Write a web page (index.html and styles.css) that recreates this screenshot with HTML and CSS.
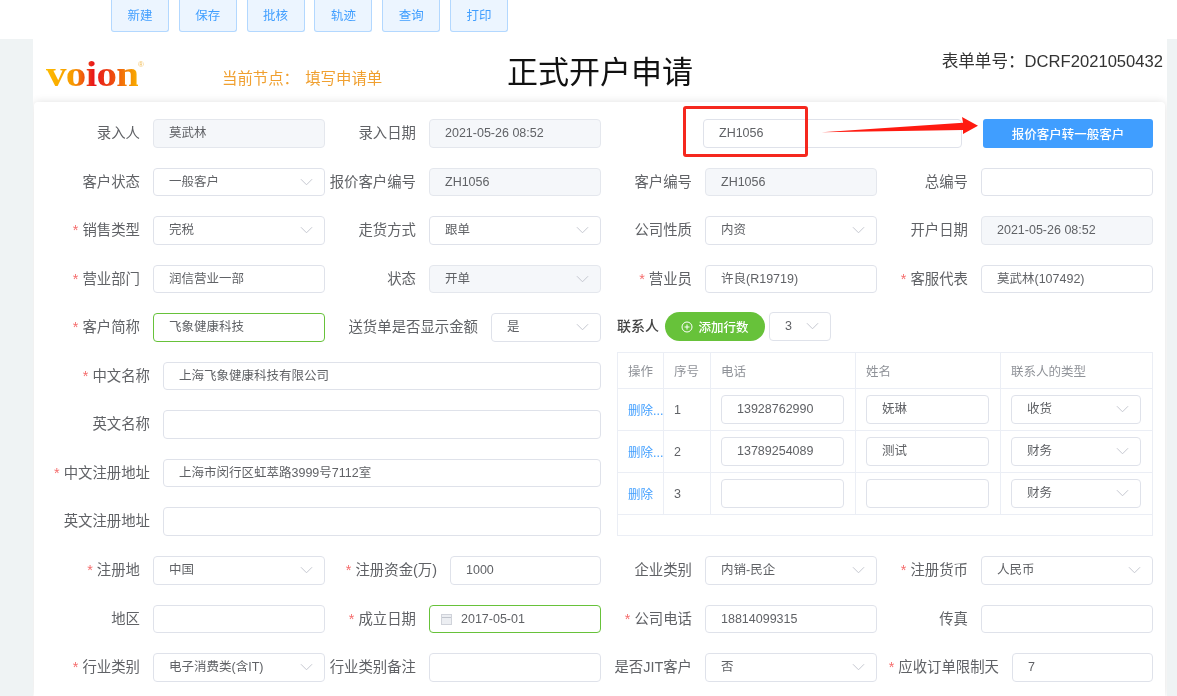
FILE: index.html
```html
<!DOCTYPE html>
<html>
<head>
  <meta charset="UTF-8">
  <title>正式开户申请</title>
  <link rel="stylesheet" href="styles.css">
</head>
<body>

  <svg width="0" height="0" class="defs">
    <symbol id="chev" viewBox="0 0 14 8"><polyline points="1,1 7,7 13,1" fill="none" stroke="#c0c4cc" stroke-width="1"/></symbol>
  </svg>

  <div class="toolbar">
    <button class="tool">新建</button>
    <button class="tool">保存</button>
    <button class="tool">批核</button>
    <button class="tool">轨迹</button>
    <button class="tool">查询</button>
    <button class="tool">打印</button>
  </div>

  <div class="shell">
    <div class="main">
      <div class="head">
        <div class="logo"><span class="logo-text">voion</span><span class="reg">®</span></div>
        <div class="node">当前节点： 填写申请单</div>
        <h1 class="title">正式开户申请</h1>
        <div class="formno">表单单号：DCRF2021050432</div>
      </div>

      <div class="card">
        <div class="row">
          <div class="field"><label>录入人</label><div class="ctl off">莫武林</div></div>
          <div class="field"><label>录入日期</label><div class="ctl off">2021-05-26 08:52</div></div>
          <div class="convert">
            <div class="ctl">ZH1056</div>
            <button class="btn-blue">报价客户转一般客户</button>
          </div>
        </div>

        <div class="row">
          <div class="field"><label>客户状态</label><div class="ctl sel">一般客户<svg class="chev"><use href="#chev"/></svg></div></div>
          <div class="field"><label>报价客户编号</label><div class="ctl off">ZH1056</div></div>
          <div class="field"><label>客户编号</label><div class="ctl off">ZH1056</div></div>
          <div class="field"><label>总编号</label><div class="ctl"></div></div>
        </div>

        <div class="row">
          <div class="field"><label><i>*</i>销售类型</label><div class="ctl sel">完税<svg class="chev"><use href="#chev"/></svg></div></div>
          <div class="field"><label>走货方式</label><div class="ctl sel">跟单<svg class="chev"><use href="#chev"/></svg></div></div>
          <div class="field"><label>公司性质</label><div class="ctl sel">内资<svg class="chev"><use href="#chev"/></svg></div></div>
          <div class="field"><label>开户日期</label><div class="ctl off">2021-05-26 08:52</div></div>
        </div>

        <div class="row">
          <div class="field"><label><i>*</i>营业部门</label><div class="ctl">润信营业一部</div></div>
          <div class="field"><label>状态</label><div class="ctl sel off">开单<svg class="chev"><use href="#chev"/></svg></div></div>
          <div class="field"><label><i>*</i>营业员</label><div class="ctl">许良(R19719)</div></div>
          <div class="field"><label><i>*</i>客服代表</label><div class="ctl">莫武林(107492)</div></div>
        </div>

        <div class="middle">
          <div class="left">
            <div class="subrow">
              <div class="field"><label><i>*</i>客户简称</label><div class="ctl ok">飞象健康科技</div></div>
              <div class="field w153"><label>送货单是否显示金额</label><div class="ctl sel">是<svg class="chev"><use href="#chev"/></svg></div></div>
            </div>
            <div class="field wide"><label><i>*</i>中文名称</label><div class="ctl">上海飞象健康科技有限公司</div></div>
            <div class="field wide"><label>英文名称</label><div class="ctl"></div></div>
            <div class="field wide"><label><i>*</i>中文注册地址</label><div class="ctl">上海市闵行区虹萃路3999号7112室</div></div>
            <div class="field wide"><label>英文注册地址</label><div class="ctl"></div></div>
          </div>

          <div class="contacts">
            <div class="contact-bar">
              <span class="contact-title">联系人</span>
              <button class="btn-green">
                <svg class="plus" viewBox="0 0 12 12"><circle cx="6" cy="6" r="5" fill="none" stroke="#fff"/><path d="M6 3.5v5M3.5 6h5" stroke="#fff"/></svg>添加行数
              </button>
              <div class="ctl sel count">3<svg class="chev"><use href="#chev"/></svg></div>
            </div>
            <table class="grid">
              <colgroup><col class="c1"><col class="c2"><col class="c3"><col class="c3"><col></colgroup>
              <tr class="th">
                <th>操作</th><th>序号</th><th>电话</th><th>姓名</th><th>联系人的类型</th>
              </tr>
              <tr>
                <td class="del">删除...</td><td>1</td>
                <td><div class="ctl">13928762990</div></td>
                <td><div class="ctl">妩琳</div></td>
                <td><div class="ctl sel">收货<svg class="chev"><use href="#chev"/></svg></div></td>
              </tr>
              <tr>
                <td class="del">删除...</td><td>2</td>
                <td><div class="ctl">13789254089</div></td>
                <td><div class="ctl">测试</div></td>
                <td><div class="ctl sel">财务<svg class="chev"><use href="#chev"/></svg></div></td>
              </tr>
              <tr>
                <td class="del">删除</td><td>3</td>
                <td><div class="ctl"></div></td>
                <td><div class="ctl"></div></td>
                <td><div class="ctl sel">财务<svg class="chev"><use href="#chev"/></svg></div></td>
              </tr>
              <tr class="empty"><td colspan="5"></td></tr>
            </table>
          </div>
        </div>

        <div class="row">
          <div class="field"><label><i>*</i>注册地</label><div class="ctl sel">中国<svg class="chev"><use href="#chev"/></svg></div></div>
          <div class="field w112"><label><i>*</i>注册资金(万)</label><div class="ctl">1000</div></div>
          <div class="field"><label>企业类别</label><div class="ctl sel">内销-民企<svg class="chev"><use href="#chev"/></svg></div></div>
          <div class="field"><label><i>*</i>注册货币</label><div class="ctl sel">人民币<svg class="chev"><use href="#chev"/></svg></div></div>
        </div>

        <div class="row">
          <div class="field"><label>地区</label><div class="ctl"></div></div>
          <div class="field"><label><i>*</i>成立日期</label>
            <div class="ctl ok date">
              <svg class="cal" viewBox="0 0 11 12"><rect x="0.5" y="1.5" width="10" height="10" fill="#eceef2" stroke="#d0d3da"/><path d="M1 4.5h9" stroke="#c0c4cc"/></svg>2017-05-01
            </div>
          </div>
          <div class="field"><label><i>*</i>公司电话</label><div class="ctl">18814099315</div></div>
          <div class="field"><label>传真</label><div class="ctl"></div></div>
        </div>

        <div class="row">
          <div class="field"><label><i>*</i>行业类别</label><div class="ctl sel">电子消费类(含IT)<svg class="chev"><use href="#chev"/></svg></div></div>
          <div class="field"><label>行业类别备注</label><div class="ctl"></div></div>
          <div class="field"><label>是否JIT客户</label><div class="ctl sel">否<svg class="chev"><use href="#chev"/></svg></div></div>
          <div class="field w122"><label><i>*</i>应收订单限制天</label><div class="ctl">7</div></div>
        </div>
      </div>
    </div>
  </div>

  <!-- annotation drawn over the screenshot -->
  <div class="redbox"></div>
  <svg class="arrow" viewBox="0 0 160 20"><polygon points="0.7,15.3 142,5.7 141,0 157,8.7 142,17 142,13" fill="#ff1a10"/></svg>

</body>
</html>
```

FILE: styles.css
```css
* {
  box-sizing: border-box;
}
html, body {
  margin: 0;
  height: 696px;
  overflow: hidden;
}
body {
  position: relative;
  background: white;
  font-family: "Liberation Sans", "Noto Sans CJK SC", sans-serif;
  color: #606266;
  font-size: 12.5px;
  filter: blur(0.35px);
}
.defs {
  position: absolute;
}

.toolbar {
  height: 39px;
  padding-left: 111px;
  display: flex;
  gap: 9.8px;
  background: white;
}
.tool {
  width: 58px;
  height: 32px;
  margin: 0;
  padding: 0 0 2px;
  background: #ecf5ff;
  border: 1px solid #b3d8ff;
  border-top: none;
  border-radius: 0 0 3px 3px;
  color: #409eff;
  font: inherit;
}

.shell {
  height: 657px;
  padding-left: 33px;
  background: #eff3f4;
}
.main {
  width: 1134px;
  height: 100%;
  background: white;
  overflow: hidden;
}
.head {
  height: 63px;
  display: flex;
  padding-left: 13px;
}
.logo {
  position: relative;
  width: 176px;
  margin-top: 12px;
}
.logo-text {
  display: inline-block;
  font-family: "Liberation Serif", serif;
  font-weight: bold;
  font-size: 36px;
  line-height: 46px;
  letter-spacing: -0.6px;
  transform: scaleX(1.14);
  transform-origin: left;
  background: linear-gradient(90deg, #fdbb00 0, #f79a00 24px, #e8141c 42px, #ee4a10 58px, #f8a800 79px);
  -webkit-background-clip: text;
  background-clip: text;
  color: transparent;
}
.reg {
  position: absolute;
  left: 92px;
  top: 10px;
  width: 7px;
  height: 7px;
  font-size: 8px;
  line-height: 7px;
  color: #f2c060;
}
.node {
  width: 285px;
  margin-top: 30px;
  font-size: 15.4px;
  line-height: 20px;
  word-spacing: 2px;
  color: #f0a030;
}
.title {
  width: 230px;
  margin: 12px 0 0;
  font-size: 31px;
  line-height: 44px;
  font-weight: normal;
  color: #111;
}
.formno {
  margin-left: auto;
  margin-top: 13px;
  padding-right: 4px;
  font-size: 16.6px;
  line-height: 20px;
  color: #333;
  white-space: nowrap;
}

.card {
  width: 1131px;
  margin-left: 1px;
  height: 594px;
  padding: 17px 15px 0;
  background: white;
  border-radius: 4px 4px 0 0;
  box-shadow: 0 0 8px rgba(0,0,0,0.12);
  display: flex;
  flex-direction: column;
  gap: 20px;
  overflow: hidden;
}
.row {
  display: grid;
  grid-template-columns: repeat(4, 276px);
}
.subrow {
  display: grid;
  grid-template-columns: 276px 276px;
}

.field {
  display: flex;
  height: 28.5px;
  align-items: center;
}
.field label {
  flex: none;
  width: 91px;
  margin-right: 13px;
  padding-bottom: 3px;
  text-align: right;
  white-space: nowrap;
  font-size: 14.4px;
}
.field label i {
  margin-right: 4px;
  color: #f56c6c;
  font-style: normal;
}
.field .ctl {
  flex: 1;
}
.field.w112 label { width: 112px; }
.field.w122 label { width: 122px; }
.field.w153 label { width: 153px; }
.field.wide label { width: 101px; }

.ctl {
  position: relative;
  height: 28.5px;
  padding-left: 15px;
  line-height: 26.5px;
  background: white;
  border: 1px solid #dfe2ea;
  border-radius: 4px;
  white-space: nowrap;
  overflow: hidden;
}
.ctl.off {
  background: #f5f7fa;
  border-color: #e4e7ed;
}
.ctl.ok {
  border-color: #67c23a;
}
.chev {
  position: absolute;
  right: 11px;
  top: 9px;
  width: 13px;
  height: 8px;
}
.date {
  padding-left: 11px;
  display: flex;
  align-items: center;
}
.cal {
  width: 11px;
  height: 12px;
  margin-right: 9px;
}

.convert {
  grid-column: span 2;
  display: flex;
  padding-left: 102px;
  gap: 21px;
}
.convert .ctl {
  width: 259px;
}
.btn-blue {
  width: 170px;
  height: 28.5px;
  padding: 0;
  background: #409eff;
  border: none;
  border-radius: 3px;
  color: white;
  font: inherit;
  font-weight: 500;
}

.middle {
  display: flex;
  gap: 16px;
}
.left {
  width: 552px;
  display: flex;
  flex-direction: column;
  gap: 20px;
}
.contacts {
  width: 536px;
}
.contact-bar {
  height: 29px;
  margin-top: -1px;
  margin-bottom: 11px;
  display: flex;
  align-items: center;
}
.contact-title {
  width: 48px;
  padding-bottom: 3px;
  font-size: 14px;
  font-weight: 500;
  color: #444;
}
.btn-green {
  width: 100px;
  height: 29px;
  padding: 0;
  display: flex;
  align-items: center;
  justify-content: center;
  background: #67c23a;
  border: none;
  border-radius: 15px;
  color: white;
  font: inherit;
  font-weight: 500;
}
.plus {
  width: 12px;
  height: 12px;
  margin-right: 5px;
}
.count {
  width: 62px;
  margin-left: 4px;
}

.grid {
  width: 536px;
  table-layout: fixed;
  border-collapse: collapse;
  border: 1px solid #ebeef5;
}
.grid .c1 { width: 46px; }
.grid .c2 { width: 47px; }
.grid .c3 { width: 145px; }
.grid th, .grid td {
  border: 1px solid #ebeef5;
  padding: 0 10px;
  height: 42px;
  font-weight: normal;
  text-align: left;
  white-space: nowrap;
  overflow: hidden;
}
.grid th {
  height: 36px;
  color: #909399;
}
.grid .del {
  color: #409eff;
  padding-right: 0;
}
.grid .empty td {
  height: 21px;
}
.grid .ctl {
  width: 123px;
}
.grid td:last-child .ctl {
  width: 130px;
}

.redbox {
  position: absolute;
  left: 683px;
  top: 106px;
  width: 125px;
  height: 51px;
  border: 3px solid #f5281e;
  border-radius: 3px;
}
.arrow {
  position: absolute;
  left: 821px;
  top: 117px;
  width: 160px;
  height: 20px;
}
```
